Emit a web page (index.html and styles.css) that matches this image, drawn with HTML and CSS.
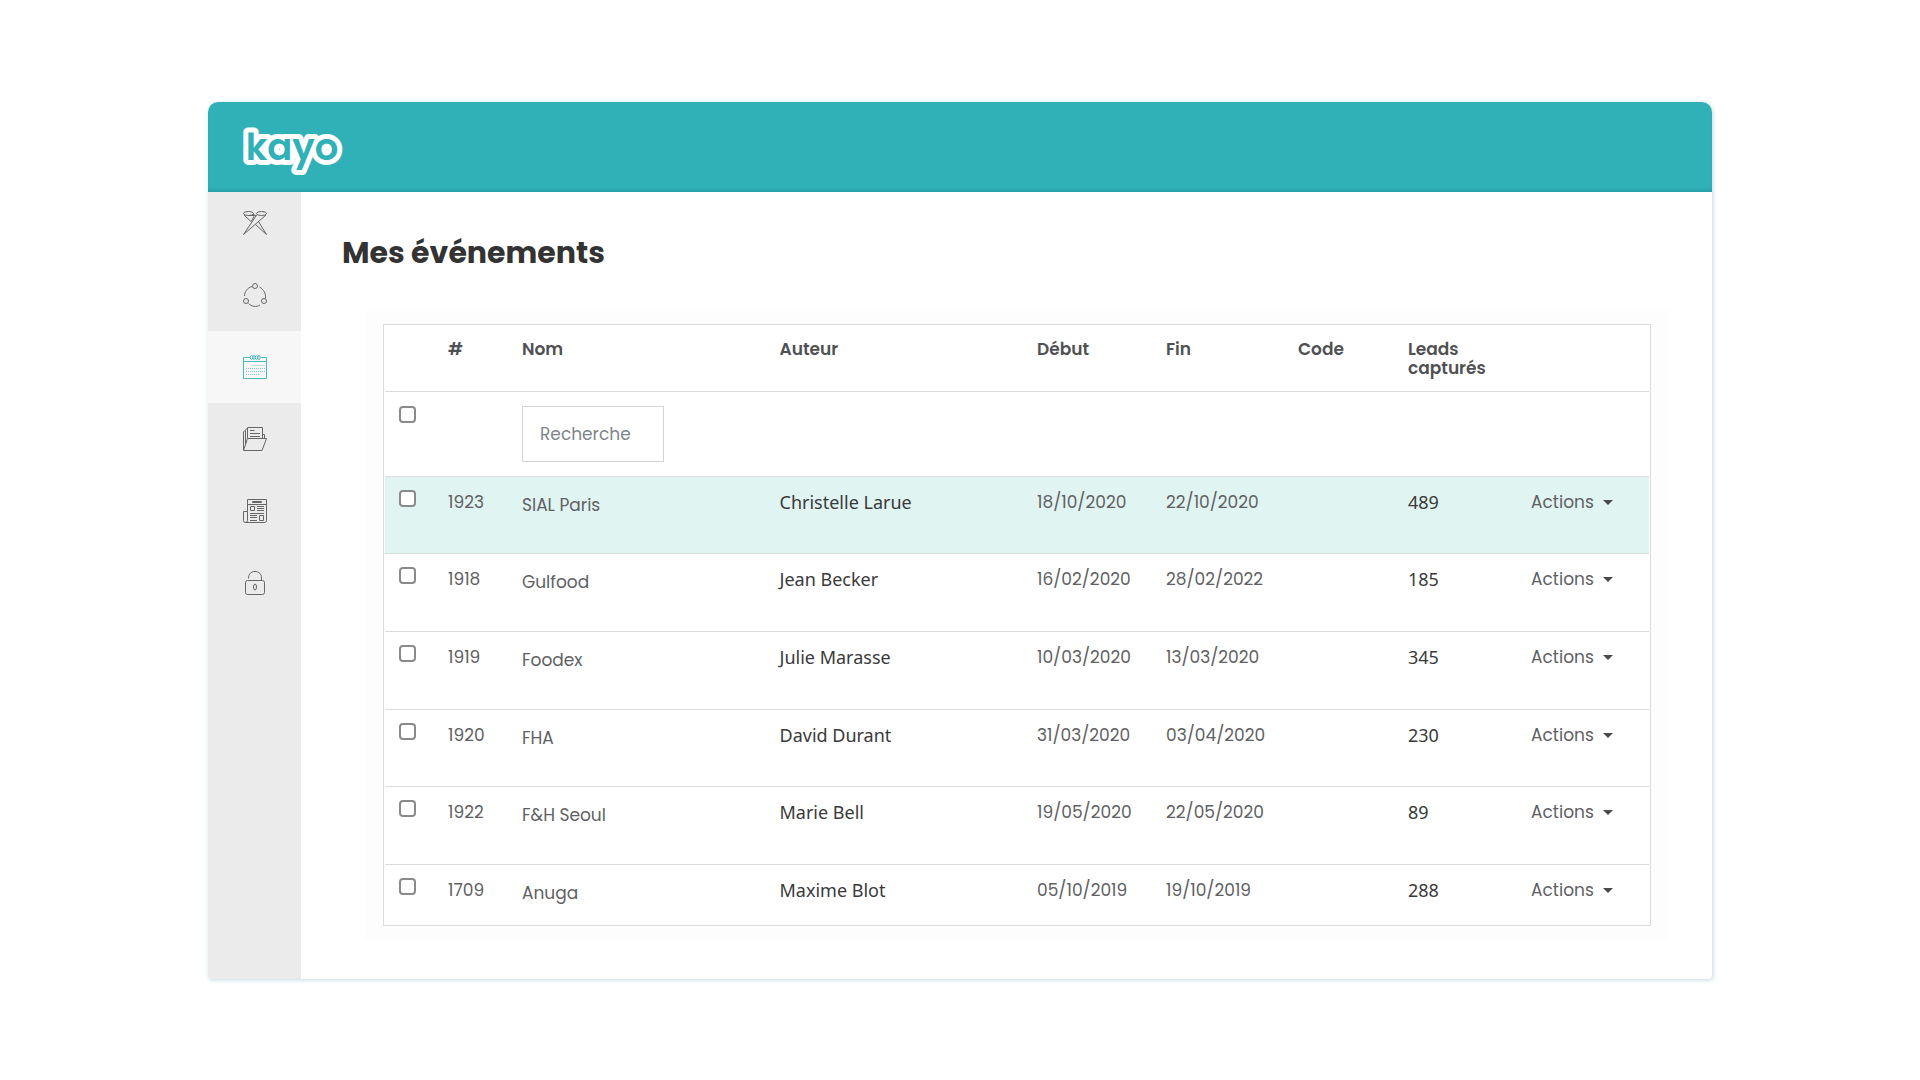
FILE: index.html
```html
<!DOCTYPE html>
<html lang="fr">
<head>
<meta charset="utf-8">
<meta name="viewport" content="width=device-width, initial-scale=1">
<title>Kayo – Mes événements</title>
<link rel="stylesheet" href="styles.css">
</head>
<body>
<div class="app">
  <header class="topbar">
    <a class="logo" href="#" aria-label="kayo">
      <svg width="100" height="46" viewBox="0 0 100 46"><text class="logo-text" x="50" y="33" text-anchor="middle">kayo</text></svg>
    </a>
  </header>
  <div class="layout">
    <nav class="sidebar" aria-label="Navigation">
      <a class="nav-item" href="#" aria-label="Badges">
        <svg class="icon" viewBox="0 0 24 24"><ellipse cx="5.500" cy="2.500" rx="5" ry="2"/><ellipse cx="18.500" cy="2.500" rx="5" ry="2"/><path d="M1 4l8 7.500M10 3.500l3 1M5 4.500h6.500l-3 5.500M23 4L.5 23.500 14 3.500M12.500 13.500l11 10-8-13"/></svg>
      </a>
      <a class="nav-item" href="#" aria-label="Réseau">
        <svg class="icon" viewBox="0 0 24 24"><circle cx="12" cy="3" r="2.500"/><circle cx="3" cy="18" r="2.500"/><circle cx="21" cy="18" r="2.500"/><path d="M9 3.500C4 5 1.500 9 1.500 13M16.500 4c4.500 2.500 6.500 7 6 11.500M5.500 20.500c3 3 8 4 11.500 1.500"/></svg>
      </a>
      <a class="nav-item active" href="#" aria-label="Événements" aria-current="page">
        <svg class="icon" viewBox="0 0 24 24"><path d="M7 2.500H.5v21h23v-21H18M.5 6.500h23"/><ellipse cx="8.500" cy="2.500" rx="1.200" ry="2"/><ellipse cx="11" cy="2.500" rx="1.200" ry="2"/><ellipse cx="13.500" cy="2.500" rx="1.200" ry="2"/><ellipse cx="16" cy="2.500" rx="1.200" ry="2"/><path class="dots" d="M8.500 10.500H22M3 13.500h19M3 16.500h19M3 19.500h14"/></svg>
      </a>
      <a class="nav-item" href="#" aria-label="Documents">
        <svg class="icon" viewBox="0 0 24 24"><path d="M4.500 11.500h19l-4.500 12H.5zM.5 23V5l4-4M2.500 17V4M4.500 11.500V.5h15v11M20 7.500h1.500v4M7 3.500h4.500M7 6.500h10M7 9.500h10"/></svg>
      </a>
      <a class="nav-item" href="#" aria-label="Actualités">
        <svg class="icon" viewBox="0 0 24 24"><path d="M4.500.5h19v21q0 2-2 2h-19q-2 0-2-2v-9h4v9q0 2-2 2M4.500 12.500V.5M4.500 5.500h19M9.500 2.500h9v1h-9zM7.500 7.500h4v4h-4zM14 7.500h7M14 9.500h7M14 11.500h7M7 14.500h14M7 16.500h7M7 18.500h7M7 21.500h7M16.500 16.500h4v5h-4z"/></svg>
      </a>
      <a class="nav-item" href="#" aria-label="Sécurité">
        <svg class="icon" viewBox="0 0 24 24"><rect x="2.500" y="9.500" width="19" height="14" rx="2"/><path d="M5.500 7.500C5.500 3 8 .5 12 .5s6.500 2.500 6.500 6.500v2.500"/><ellipse cx="12" cy="16" rx="1.500" ry="3"/></svg>
      </a>
    </nav>
    <main class="content">
      <h1 class="title">Mes événements</h1>
      <div class="panel">
        <div class="table-frame">
          <table class="events">
            <colgroup>
              <col class="c-check"><col class="c-id"><col><col><col class="c-start"><col class="c-end"><col class="c-code"><col class="c-leads"><col class="c-actions">
            </colgroup>
            <thead>
              <tr><th></th><th scope="col">#</th><th scope="col">Nom</th><th scope="col">Auteur</th><th scope="col">Début</th><th scope="col">Fin</th><th scope="col">Code</th><th scope="col">Leads capturés</th><th></th></tr>
              <tr class="filters"><td><input class="check" type="checkbox" aria-label="Tout sélectionner"></td><td></td><td><input class="search" type="text" placeholder="Recherche" aria-label="Recherche par nom"></td><td></td><td></td><td></td><td></td><td></td><td></td></tr>
            </thead>
            <tbody>
              <tr class="selected"><td><input class="check" type="checkbox" aria-label="SIAL Paris"></td><td>1923</td><td class="name">SIAL Paris</td><td class="author">Christelle Larue</td><td>18/10/2020</td><td>22/10/2020</td><td></td><td class="leads">489</td><td><button class="actions" type="button">Actions</button></td></tr>
              <tr><td><input class="check" type="checkbox" aria-label="Gulfood"></td><td>1918</td><td class="name">Gulfood</td><td class="author">Jean Becker</td><td>16/02/2020</td><td>28/02/2022</td><td></td><td class="leads">185</td><td><button class="actions" type="button">Actions</button></td></tr>
              <tr><td><input class="check" type="checkbox" aria-label="Foodex"></td><td>1919</td><td class="name">Foodex</td><td class="author">Julie Marasse</td><td>10/03/2020</td><td>13/03/2020</td><td></td><td class="leads">345</td><td><button class="actions" type="button">Actions</button></td></tr>
              <tr><td><input class="check" type="checkbox" aria-label="FHA"></td><td>1920</td><td class="name">FHA</td><td class="author">David Durant</td><td>31/03/2020</td><td>03/04/2020</td><td></td><td class="leads">230</td><td><button class="actions" type="button">Actions</button></td></tr>
              <tr><td><input class="check" type="checkbox" aria-label="F&amp;H Seoul"></td><td>1922</td><td class="name">F&amp;H Seoul</td><td class="author">Marie Bell</td><td>19/05/2020</td><td>22/05/2020</td><td></td><td class="leads">89</td><td><button class="actions" type="button">Actions</button></td></tr>
              <tr><td><input class="check" type="checkbox" aria-label="Anuga"></td><td>1709</td><td class="name">Anuga</td><td class="author">Maxime Blot</td><td>05/10/2019</td><td>19/10/2019</td><td></td><td class="leads">288</td><td><button class="actions" type="button">Actions</button></td></tr>
            </tbody>
          </table>
        </div>
      </div>
    </main>
  </div>
</div>
</body>
</html>
```
FILE: styles.css
```css
* { box-sizing: border-box; }

body {
  margin: 0;
  padding: 102px 208px 100px;
  background: #fff;
  color: #606163;
  font-family: Poppins, Inter, "Liberation Sans", sans-serif;
  font-size: 17px;
}

.app {
  border-radius: 10px 10px 4px 4px;
  box-shadow: 1px 1px 4px rgba(70, 150, 160, 0.35);
}

.topbar {
  position: relative;
  z-index: 1;
  display: flex;
  align-items: center;
  height: 90px;
  padding: 6px 34px 0;
  border-radius: 10px 10px 0 0;
  background: #30b1b8;
  box-shadow: inset 0 -4px 4px -2px rgba(0, 80, 90, 0.2);
}

.logo { display: flex; }
.logo svg { overflow: visible; }

.logo-text {
  font-family: Poppins, Lato, sans-serif;
  font-size: 37px;
  font-weight: 600;
  fill: #30b1b8;
  stroke: #fff;
  stroke-width: 10px;
  stroke-linejoin: round;
  paint-order: stroke;
}

.layout { display: flex; }

.sidebar {
  flex: none;
  width: 93px;
  margin-top: -5px;
  border-radius: 0 0 0 4px;
  background: #ebebeb;
}

.nav-item {
  display: flex;
  align-items: center;
  justify-content: center;
  height: 72px;
}

.nav-item.active { background: #f7f7f7; }

.icon {
  width: 24px;
  height: 24px;
  overflow: visible;
  fill: none;
  stroke: #666;
  stroke-width: 1;
}

.active .icon { stroke: #4bbabb; }
.icon .dots { stroke-dasharray: 1 1; opacity: 0.7; }

.content {
  flex: 1;
  min-width: 0;
  padding: 37px 43px 39px 41px;
}

.title {
  margin: 0 0 33px;
  color: #333;
  font-size: 30px;
  line-height: 48px;
}

.panel {
  margin-left: 23px;
  padding: 14px 18px;
  background: #fdfdfd;
}

.table-frame {
  padding: 0 1px;
  border: 1px solid #dcdcdc;
  background: #fff;
}

.events {
  width: 100%;
  table-layout: fixed;
  border-collapse: separate;
  border-spacing: 0;
}

.c-check { width: 51px; }
.c-id { width: 74px; }
.c-start { width: 129px; }
.c-end { width: 132px; }
.c-code { width: 110px; }
.c-leads { width: 123px; }
.c-actions { width: 130px; }

.events th,
.events td {
  padding: 13px 12px 0;
  border-bottom: 1px solid #dcdcdc;
  line-height: 24px;
  text-align: left;
  vertical-align: top;
}

.events th {
  height: 67px;
  padding-top: 15px;
  color: #505153;
  font-weight: 600;
  line-height: 19px;
}

.events .filters td { height: 85px; padding-top: 14px; }
.events tbody td { height: 78px; }
.events tbody tr:nth-child(3n + 1) td { height: 77px; }
.events tbody tr:last-child td { height: 60px; border-bottom: 0; }

.events .selected td { background: #e0f4f2; }

.events td.name { padding-top: 16px; }

.events td.author,
.events td.leads {
  color: #3a3a3a;
  font-family: "Noto Sans", "Open Sans", sans-serif;
  font-size: 18px;
}

.check {
  appearance: none;
  display: block;
  width: 17px;
  height: 17px;
  margin: 0 2px;
  border: 2px solid #8a8a8a;
  border-radius: 4px;
  background: #fff;
}

.check:checked { background: #30b1b8; }

.search {
  display: block;
  width: 142px;
  height: 56px;
  padding: 0 17px;
  border: 1px solid #d5d5d5;
  background: #fff;
  color: #58595b;
  font: inherit;
}

.search::placeholder { color: #808488; }

.actions {
  display: flex;
  align-items: center;
  gap: 9px;
  padding: 0;
  border: 0;
  background: none;
  color: inherit;
  font: inherit;
  line-height: 24px;
}

.actions::after {
  content: "";
  border-top: 5px solid #4a4a4a;
  border-right: 5px solid transparent;
  border-left: 5px solid transparent;
}
```
